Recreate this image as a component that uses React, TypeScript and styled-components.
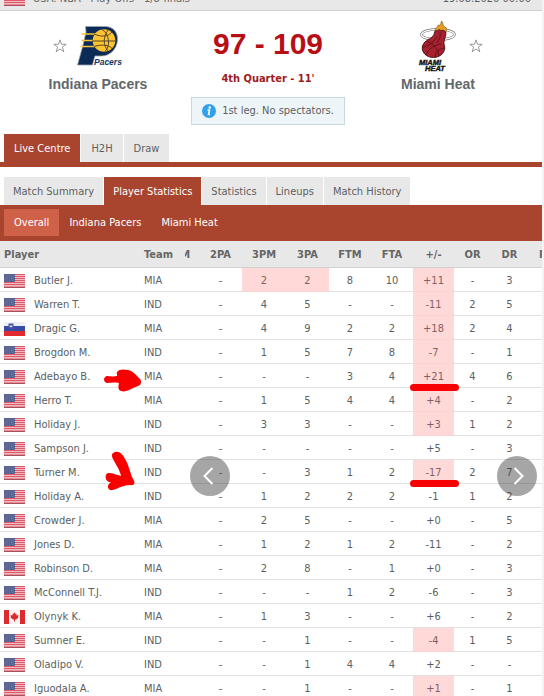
import React from "react";
import styled, { createGlobalStyle, css } from "styled-components";

const RED = "#a9452f";
const GREY = "#e8e8e8";
const LINE = "#e0e2e2";

const GlobalStyle = createGlobalStyle`
  * { box-sizing: border-box; }
  html { background: #f3f3f3; }
  body {
    margin: 0;
    font-family: "DejaVu Sans Condensed", Tahoma, "DejaVu Sans", sans-serif;
    font-size: 11px;
    line-height: 16px;
    color: #5a5f62;
  }
  button { font: inherit; border: 0; margin: 0; cursor: pointer; }
`;

const Page = styled.main`
  margin-right: 2px;
  background: #fff;
  overflow: hidden;
`;

const LeagueBar = styled.header`
  display: flex;
  align-items: flex-end;
  justify-content: space-between;
  height: 11px;
  padding: 0 11px 4px 4px;
  overflow: hidden;
  background: ${GREY};
  border-bottom: 1px solid #d0d0d0;
  line-height: 14px;
`;

const LeagueName = styled.span`
  display: flex;
  align-items: flex-end;
  gap: 8px;
  color: #666;
`;

const Scoreboard = styled.section`
  padding: 9px 6px 9px 0;
`;

const Teams = styled.div`
  display: grid;
  grid-template-columns: 1fr 144px 1fr;
`;

const Team = styled.div`
  display: flex;
  flex-direction: column;
  align-items: center;
  gap: 2px;
`;

const TeamBadge = styled.div`
  display: grid;
  grid-template-columns: 14px 50px 14px;
  align-items: center;
  gap: 6px;
`;

const TeamName = styled.h2`
  margin: 0;
  font: bold 14px/20px "Liberation Sans", Arial, sans-serif;
  color: #62686b;
`;

const StarButton = styled.button`
  display: flex;
  width: 14px;
  padding: 0;
  background: none;
`;

const Result = styled.div`
  display: flex;
  flex-direction: column;
  align-items: center;
  padding-top: 5px;
  gap: 8px;
  color: #b80f14;
  white-space: nowrap;
`;

const Score = styled.div`
  font: bold 30px/38px "Liberation Sans", Arial, sans-serif;
`;

const Period = styled.div`
  font-weight: bold;
  color: #a01c20;
`;

const Notice = styled.div`
  display: flex;
  align-items: center;
  gap: 6px;
  width: max-content;
  height: 28px;
  margin: 3px auto 0;
  padding: 0 10px;
  background: #eef5f9;
  border: 1px solid #c9d7df;
`;

const Tab = styled.button<{ $active?: boolean }>`
  height: 28px;
  padding: 2px 10px 0;
  white-space: nowrap;
  background: ${(p) => (p.$active ? RED : GREY)};
  color: ${(p) => (p.$active ? "#fff" : "#5f5f5f")};
`;

const Tabs = styled.nav`
  display: flex;
  gap: 1px;
  padding: 0 4px;
`;

const MainTabs = styled(Tabs)`
  border-bottom: 5px solid ${RED};
`;

const SubTabs = styled(Tabs)`
  margin-top: 10px;
  ${Tab} {
    padding-left: 9px;
    padding-right: 9px;
  }
`;

const FilterBar = styled.nav`
  display: flex;
  padding: 4px;
  height: 36px;
  background: ${RED};
`;

const Filter = styled.button<{ $active?: boolean }>`
  height: 27px;
  padding: 0 10px;
  white-space: nowrap;
  color: #fff;
  background: ${(p) => (p.$active ? "#cf6149" : "transparent")};
`;

const StatsPanel = styled.section`
  position: relative;
  overflow: hidden;
`;

const StatsTable = styled.table`
  width: calc(100% + 22px);
  table-layout: fixed;
  border-collapse: separate;
  border-spacing: 0;
`;

const Col = styled.col<{ $w?: number }>`
  ${(p) => p.$w && css`width: ${p.$w}px;`}
`;

const HeadCell = styled.th<{ $left?: boolean }>`
  height: 27px;
  padding: 1px 0 0 ${(p) => (p.$left ? "4px" : "0")};
  text-align: ${(p) => (p.$left ? "left" : "center")};
  background: ${GREY};
  border-bottom: 1px solid #cfd1d1;
  color: #666;
`;

const TeamHead = styled(HeadCell)`
  padding-left: 0;
`;

const Clipped = styled.span`
  display: flex;
  justify-content: flex-end;
  width: 5px;
  overflow: hidden;
`;

const Cell = styled.td<{ $hot?: boolean }>`
  height: 24px;
  padding: 2px 0 0;
  text-align: center;
  border-bottom: 1px solid ${LINE};
  ${(p) => p.$hot && css`
    background: #ffd8d8;
    border-bottom-color: #fbd3d3;
    color: #85605f;
  `}
`;

const TeamCell = styled(Cell)`
  text-align: left;
`;

const PlayerCell = styled(Cell)`
  padding-left: 4px;
  text-align: left;
`;

const Player = styled.span`
  display: flex;
  align-items: center;
  gap: 9px;
`;

const Marked = styled.span`
  position: relative;
  display: block;
  &::after {
    content: "";
    position: absolute;
    left: -3px;
    right: -5px;
    top: 15px;
    height: 7px;
    border-radius: 4px;
    background: #f80000;
    z-index: 1;
  }
`;

const Scroller = styled.button<{ $side: "left" | "right" }>`
  position: absolute;
  top: 215px;
  ${(p) => (p.$side === "left" ? "left: 190px;" : "right: 5px;")}
  display: flex;
  align-items: center;
  justify-content: center;
  width: 40px;
  height: 40px;
  padding: 0;
  border-radius: 50%;
  background: rgba(60, 60, 60, 0.46);
`;

const Scribble = styled.svg<{ $top: number }>`
  position: absolute;
  left: 103px;
  top: ${(p) => p.$top}px;
  pointer-events: none;
`;

const Star = () => (
  <svg width="14" height="14" viewBox="0 0 14 14" fill="none" stroke="#8d8d8d" strokeWidth="0.9">
    <path d="M7 .9 8.5 5.3H13.2L9.4 8.1 10.8 12.8 7 10 3.2 12.8 4.6 8.1.8 5.3H5.5Z" />
  </svg>
);

const PacersLogo = () => (
  <svg width="50" height="52" viewBox="0 0 50 52" role="img" aria-label="Indiana Pacers logo">
    <path
      d="M12.500 6.500H32C40 6.500 45 12 44.500 20C44 29 37 36 28.500 36H22L19.500 45H4.500L10 25L13 12Z"
      fill="#0b2a55"
      stroke="#9aa3ad"
      strokeWidth="0.8"
    />
    <path d="M8.500 14H24M8.500 20.500H22M7.500 26.500H22" stroke="#f7c437" strokeWidth="1.700" />
    <circle cx="31" cy="20.500" r="11.300" fill="#fcc22f" />
    <g fill="none" stroke="#463a2a" strokeWidth="0.9">
      <path d="M19 21H42.500M21 14C28 17 35 17 39 12M21 26.500C29 24 36 25 39 28.500M29 9.500C36 13 38 26 32 31.500M35 10C30 17 30 25 35 31" />
    </g>
    <text
      x="21"
      y="45"
      fontFamily="Liberation Sans, Arial, sans-serif"
      fontSize="8.500"
      fontWeight="bold"
      fontStyle="italic"
      fill="#17355f"
      stroke="#fff"
      strokeWidth="1.500"
      paintOrder="stroke"
    >
      Pacers
    </text>
  </svg>
);

const HeatLogo = () => (
  <svg width="50" height="52" viewBox="0 0 50 52" role="img" aria-label="Miami Heat logo">
    <ellipse cx="25" cy="14.500" rx="16.500" ry="5.200" fill="none" stroke="#777" strokeWidth="2.600" />
    <ellipse cx="25" cy="14.500" rx="16.500" ry="5.200" fill="none" stroke="#fff" strokeWidth="1.300" />
    <path
      d="M22 11C22 7 25 8 25 5C27 6 28 4 28.500 1C31 4 29 6 32 7C35 8 33 11 33 13L23 13Z"
      fill="#e89a22"
      stroke="#76501e"
      strokeWidth="0.600"
    />
    <path
      d="M21.500 13C22 9 24.500 12 26 9.500C28 12 30 8.500 32.500 12C34 16 30.500 19 31 24C34 31 28 37.500 20.500 37.500C13 37.500 8 32 9.500 26C11.500 19 20.500 19 21.500 13Z"
      fill="#a8202e"
      stroke="#3a1216"
      strokeWidth="0.900"
    />
    <path
      d="M10 27C17 26 21 21 24 17M13 35C15 29 21 25 28 24M22 37C22 32 26 29 31 28M14 21C21 24 25 30 26 36M27 12C28 16 26 20 24 23"
      fill="none"
      stroke="#4d1218"
      strokeWidth="0.800"
    />
    <g
      fontFamily="Liberation Sans, Arial, sans-serif"
      fontWeight="bold"
      fontStyle="italic"
      fontSize="7.500"
      fill="#111"
      stroke="#111"
      strokeWidth="0.400"
    >
      <text x="6" y="44.500">MIAMI</text>
      <text x="12" y="51">HEAT</text>
    </g>
  </svg>
);

type Country = "us" | "si" | "ca";

const Flag = ({ country }: { country: Country }) => (
  <svg width="21" height="14" viewBox="0 0 21 14" role="img" aria-label={country.toUpperCase()}>
    {country === "us" && (
      <>
        <rect width="21" height="14" fill="#f3b9c0" />
        <path d="M0 .5H21M0 2.500H21M0 4.500H21M0 6.500H21M0 8.500H21M0 10.500H21M0 13H21" stroke="#dc5a68" />
        <path d="M0 13.500H21" stroke="#a8505e" />
        <rect width="11" height="8" fill="#59648f" />
        <path d="M1 2H11M1 4H11M1 6H11" stroke="#7c86a8" strokeWidth="0.600" strokeDasharray="1 1" />
      </>
    )}
    {country === "si" && (
      <>
        <rect width="21" height="14" fill="#eef0f4" />
        <rect y="4" width="21" height="5" fill="#3a4ba6" />
        <rect y="9" width="21" height="5" fill="#e02c30" />
        <path d="M4.500 1.500H9.500V4.500C9.500 6 8 6.500 7 7C6 6.500 4.500 6 4.500 4.500Z" fill="#4a5bb0" />
        <path d="M5.500 5 7 3 8.500 5Z" fill="#fff" />
      </>
    )}
    {country === "ca" && (
      <>
        <rect width="21" height="14" fill="#f8f4f4" />
        <path d="M0 0H5V14H0ZM16 0H21V14H16Z" fill="#dd2a2e" />
        <path
          d="M10.500 2 11.500 4 12.500 3.500 12.500 5.500 14.500 5 14 7 14.500 7.500 12 9.500H11V11.500H10V9.500H9L6.500 7.500 7 7 6.500 5 8.500 5.500 8.500 3.500 9.500 4Z"
          fill="#dd2a2e"
        />
      </>
    )}
  </svg>
);

const InfoIcon = () => (
  <svg width="14" height="14" viewBox="0 0 14 14" aria-hidden="true">
    <circle cx="7" cy="7" r="7" fill="#33a0ea" />
    <circle cx="7.700" cy="3.500" r="1.200" fill="#fff" />
    <path d="M5.500 6H7.500L6.500 10.500H8" fill="none" stroke="#fff" strokeWidth="1.500" />
  </svg>
);

const Chevron = ({ d }: { d: string }) => (
  <svg width="20" height="20" viewBox="0 0 20 20" fill="none" stroke="#fff" strokeWidth="2">
    <path d={d} />
  </svg>
);

const COLUMNS = ["2PA", "3PM", "3PA", "FTM", "FTA", "+/-", "OR", "DR", "PF"];
const WIDTHS = [43, 44, 43, 42, 42, 41, 37, 37, 36];

type Row = { name: string; team: string; stats: string; hot?: number[]; marked?: boolean; flag?: Country };

const ROWS: Row[] = [
  { name: "Butler J.", team: "MIA", stats: "- 2 2 8 10 +11 - 3", hot: [1, 2, 5] },
  { name: "Warren T.", team: "IND", stats: "- 4 5 - - -11 2 5", hot: [5] },
  { name: "Dragic G.", team: "MIA", stats: "- 4 9 2 2 +18 2 4", hot: [5], flag: "si" },
  { name: "Brogdon M.", team: "IND", stats: "- 1 5 7 8 -7 - 1", hot: [5] },
  { name: "Adebayo B.", team: "MIA", stats: "- - - 3 4 +21 4 6", hot: [5], marked: true },
  { name: "Herro T.", team: "MIA", stats: "- 1 5 4 4 +4 - 2", hot: [5] },
  { name: "Holiday J.", team: "IND", stats: "- 3 3 - - +3 1 2", hot: [5] },
  { name: "Sampson J.", team: "IND", stats: "- - - - - +5 - 3" },
  { name: "Turner M.", team: "IND", stats: "- - 3 1 2 -17 2 7", hot: [5], marked: true },
  { name: "Holiday A.", team: "IND", stats: "- 1 2 2 2 -1 1 2" },
  { name: "Crowder J.", team: "MIA", stats: "- 2 5 - - +0 - 5" },
  { name: "Jones D.", team: "MIA", stats: "- 1 2 1 2 -11 - 2" },
  { name: "Robinson D.", team: "MIA", stats: "- 2 8 - 1 +0 - 3" },
  { name: "McConnell T.J.", team: "IND", stats: "- - - 1 2 -6 - 3" },
  { name: "Olynyk K.", team: "MIA", stats: "- 1 3 - - +6 - 2", flag: "ca" },
  { name: "Sumner E.", team: "IND", stats: "- - 1 - - -4 1 5", hot: [5] },
  { name: "Oladipo V.", team: "IND", stats: "- - 1 4 4 +2 - -" },
  { name: "Iguodala A.", team: "MIA", stats: "- - 1 - - +1 - 1", hot: [5] },
];

export default function App() {
  return (
    <>
      <GlobalStyle />
      <Page>
        <LeagueBar>
          <LeagueName>
            <Flag country="us" />
            USA: NBA - Play Offs - 1/8-finals
          </LeagueName>
          <time>19.08.2020 00:00</time>
        </LeagueBar>

        <Scoreboard>
          <Teams>
            <Team>
              <TeamBadge>
                <StarButton aria-label="Follow Indiana Pacers"><Star /></StarButton>
                <PacersLogo />
                <span />
              </TeamBadge>
              <TeamName>Indiana Pacers</TeamName>
            </Team>
            <Result>
              <Score>97 - 109</Score>
              <Period>4th Quarter - 11'</Period>
            </Result>
            <Team>
              <TeamBadge>
                <span />
                <HeatLogo />
                <StarButton aria-label="Follow Miami Heat"><Star /></StarButton>
              </TeamBadge>
              <TeamName>Miami Heat</TeamName>
            </Team>
          </Teams>
          <Notice>
            <InfoIcon />
            1st leg. No spectators.
          </Notice>
        </Scoreboard>

        <MainTabs>
          <Tab $active>Live Centre</Tab>
          <Tab>H2H</Tab>
          <Tab>Draw</Tab>
        </MainTabs>
        <SubTabs>
          <Tab>Match Summary</Tab>
          <Tab $active>Player Statistics</Tab>
          <Tab>Statistics</Tab>
          <Tab>Lineups</Tab>
          <Tab>Match History</Tab>
        </SubTabs>
        <FilterBar>
          <Filter $active>Overall</Filter>
          <Filter>Indiana Pacers</Filter>
          <Filter>Miami Heat</Filter>
        </FilterBar>

        <StatsPanel>
          <StatsTable>
            <colgroup>
              <Col />
              <Col $w={41} />
              <Col $w={14} />
              {WIDTHS.map((w, i) => <Col key={i} $w={w} />)}
            </colgroup>
            <thead>
              <tr>
                <HeadCell $left>Player</HeadCell>
                <TeamHead $left>Team</TeamHead>
                <HeadCell><Clipped>2PM</Clipped></HeadCell>
                {COLUMNS.map((c) => <HeadCell key={c}>{c}</HeadCell>)}
              </tr>
            </thead>
            <tbody>
              {ROWS.map((row) => (
                <tr key={row.name}>
                  <PlayerCell>
                    <Player>
                      <Flag country={row.flag ?? "us"} />
                      {row.name}
                    </Player>
                  </PlayerCell>
                  <TeamCell>{row.team}</TeamCell>
                  <Cell />
                  {row.stats.split(" ").map((value, i) => (
                    <Cell key={i} $hot={row.hot?.includes(i)}>
                      {row.marked && i === 5 ? <Marked>{value}</Marked> : value}
                    </Cell>
                  ))}
                  <Cell />
                </tr>
              ))}
            </tbody>
          </StatsTable>

          <Scroller $side="left" aria-label="Previous columns"><Chevron d="M12.500 2 4.500 10 12.500 18" /></Scroller>
          <Scroller $side="right" aria-label="Next columns"><Chevron d="M7.500 2 15.500 10 7.500 18" /></Scroller>

          <Scribble $top={127} width="40" height="26" viewBox="0 0 40 26" aria-hidden="true">
            <path
              d="M4 8C0 9 0 14 4 15C8 15 11 14 16 15C15 19 15 22 18 23C23 25 29 20 35 18C39 17 39 12 36 10C32 6 30 3 25 2C20 1 16 1 14 4C13 6 15 7 14 8C10 9 7 8 4 8Z"
              fill="#f80000"
            />
          </Scribble>
          <Scribble $top={210} width="40" height="42" viewBox="0 0 40 42" aria-hidden="true">
            <path
              d="M12 1C17 0 20 4 22 8C26 14 27 22 30 28C33 32 31 35 27 34C21 34 16 37 10 39C5 40 3 35 7 32C8 31 8 31 6 31C2 30 1 22 6 22C10 22 14 24 18 25C17 19 13 14 10 8C8 4 9 2 12 1Z"
              fill="#f80000"
            />
          </Scribble>
        </StatsPanel>
      </Page>
    </>
  );
}
